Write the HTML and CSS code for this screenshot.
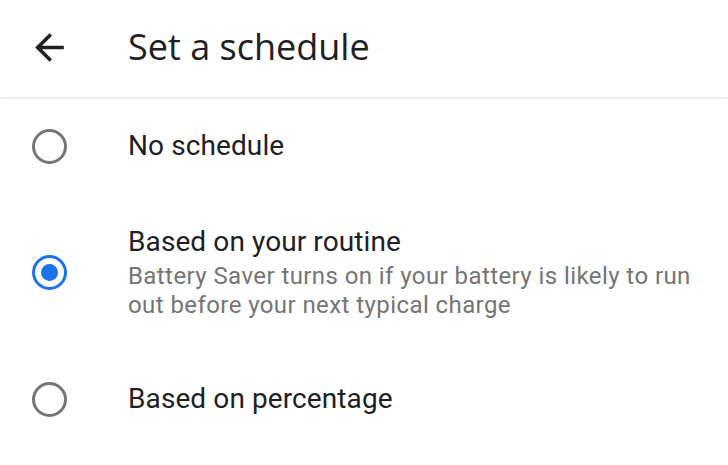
FILE: index.html
```html
<!DOCTYPE html>
<html>
<head>
<meta charset="utf-8">
<link rel="stylesheet" href="styles.css">
</head>
<body>
<div class="screen">
  <header class="appbar">
    <div class="nav-icon">
      <svg viewBox="0 0 24 24" width="43" height="43"><path d="M20 11H7.83l5.59-5.59L12 4l-8 8 8 8 1.41-1.41L7.83 13H20v-2z" fill="#202124"/></svg>
    </div>
    <h1 class="title">Set a schedule</h1>
  </header>
  <ul class="options">
    <li class="option option-first">
      <span class="radio"></span>
      <div class="text"><div class="label">No schedule</div></div>
    </li>
    <li class="option option-mid">
      <span class="radio checked"></span>
      <div class="text">
        <div class="label">Based on your routine</div>
        <div class="summary">Battery Saver turns on if your battery is likely to run out before your next typical charge</div>
      </div>
    </li>
    <li class="option option-last">
      <span class="radio"></span>
      <div class="text"><div class="label">Based on percentage</div></div>
    </li>
  </ul>
</div>
</body>
</html>
```
FILE: styles.css
```css
html, body {
  margin: 0;
  padding: 0;
  background: #ffffff;
}
.screen {
  width: 728px;
  height: 465px;
  overflow: hidden;
  background: #ffffff;
  font-family: Roboto, "Liberation Sans", sans-serif;
  color: #202124;
}
.appbar {
  height: 97px;
  display: flex;
  align-items: center;
  box-shadow: 0 1px 3px rgba(0,0,0,0.12);
  position: relative;
  z-index: 1;
}
.nav-icon {
  width: 98px;
  display: flex;
  justify-content: center;
  margin-top: -2px;
}
.nav-icon svg { display: block; }
.title {
  margin: -4px 0 0 30px;
  font-family: "Open Sans", Roboto, sans-serif;
  font-weight: 400;
  font-size: 36px;
  color: #202124;
  letter-spacing: 0;
}
.options {
  list-style: none;
  margin: 0;
  padding: 0;
}
.option {
  display: flex;
  align-items: center;
}
.option-first { height: 98px; }
.option-mid { padding: 30px 0; }
.option-last { height: 98px; }
.radio {
  flex: none;
  box-sizing: border-box;
  width: 35px;
  height: 35px;
  margin: 0 47px 0 32px;
  border: 3.5px solid #757575;
  border-radius: 50%;
  display: flex;
  align-items: center;
  justify-content: center;
}
.radio.checked {
  border-color: #1a73e8;
}
.radio.checked::after {
  content: "";
  width: 17px;
  height: 17px;
  border-radius: 50%;
  background: #1a73e8;
}
.text {
  padding-left: 14px;
  padding-right: 20px;
}
.label {
  font-size: 28px;
  line-height: 34px;
  letter-spacing: 0.1px;
  color: #202124;
}
.summary {
  margin-top: 3px;
  font-size: 24px;
  line-height: 29px;
  letter-spacing: 0.42px;
  color: #757575;
}
```
